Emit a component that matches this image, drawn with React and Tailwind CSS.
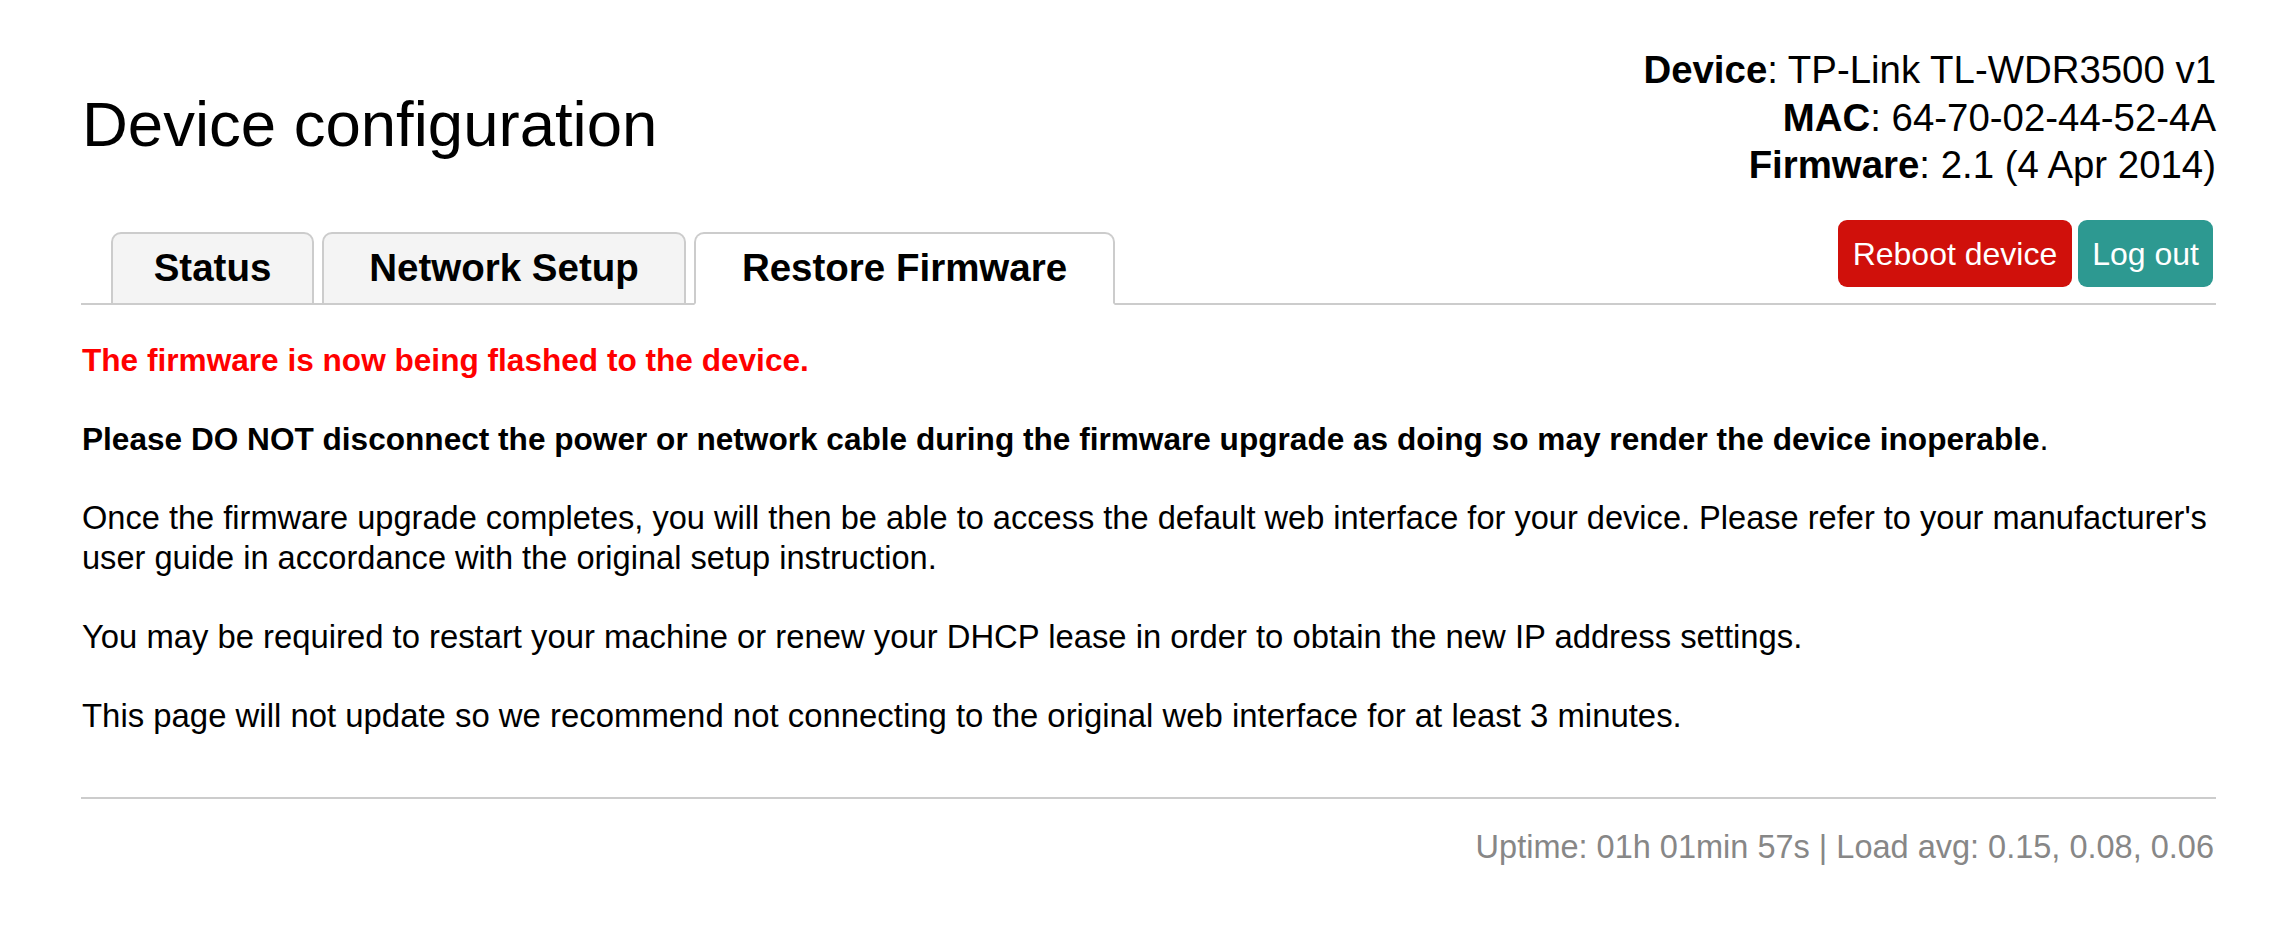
export default function App() {
  const tabBase =
    "h-[73px] -mb-[2px] border-2 border-[#cccccc] rounded-t-[10px] flex items-center justify-center font-bold text-[38.5px] leading-none text-black";
  return (
    <div className="min-h-[931px] bg-white text-black font-[Liberation_Sans,Arial,sans-serif]">
      <div className="w-[2135px] ml-[81px] pt-[46px]">
        <div className="flex justify-between items-start">
          <h1 className="mt-[46px] ml-[1px] text-[63.5px] leading-[64px] font-normal">
            Device configuration
          </h1>
          <div className="text-right text-[38.4px] leading-[47.5px]">
            <div>
              <span className="font-bold">Device</span>: TP-Link TL-WDR3500 v1
            </div>
            <div>
              <span className="font-bold">MAC</span>: 64-70-02-44-52-4A
            </div>
            <div>
              <span className="font-bold">Firmware</span>: 2.1 (4 Apr 2014)
            </div>
          </div>
        </div>

        <div className="mt-[31.5px] flex justify-between items-end border-b-2 border-[#cccccc]">
          <div className="flex items-end gap-[8px] pl-[30px]">
            <div className={`${tabBase} w-[203px] bg-[#f4f4f4]`}>Status</div>
            <div className={`${tabBase} w-[364px] bg-[#f4f4f4]`}>Network Setup</div>
            <div className={`${tabBase} w-[421px] bg-white border-b-white`}>Restore Firmware</div>
          </div>
          <div className="flex gap-[6px] mb-[16px] mr-[3px]">
            <button className="h-[67px] px-[15px] rounded-[9px] bg-[#d0100b] text-white text-[32px] leading-none">
              Reboot device
            </button>
            <button className="h-[67px] px-[14px] rounded-[9px] bg-[#2d9991] text-white text-[32px] leading-none">
              Log out
            </button>
          </div>
        </div>

        <div className="pt-[35px] pl-[1px] text-[32.6px] leading-[40px]">
          <p className="mb-[39px] text-[#ff0000] font-bold text-[31.6px]">
            The firmware is now being flashed to the device.
          </p>
          <p className="mb-[39px]">
            <span className="font-bold text-[31.6px]">
              Please DO NOT disconnect the power or network cable during the firmware upgrade as doing so may render the device inoperable
            </span>
            .
          </p>
          <p className="mb-[39px] whitespace-nowrap">
            Once the firmware upgrade completes, you will then be able to access the default web interface for your device. Please refer to your manufacturer's
            <br />
            user guide in accordance with the original setup instruction.
          </p>
          <p className="mb-[39px] text-[32.8px]">
            You may be required to restart your machine or renew your DHCP lease in order to obtain the new IP address settings.
          </p>
          <p className="text-[32.9px]">
            This page will not update so we recommend not connecting to the original web interface for at least 3 minutes.
          </p>
        </div>

        <div className="mt-[61px] border-t-2 border-[#cccccc]" />
        <div className="pt-[28px] pr-[2px] text-right text-[#878787] text-[32.5px] leading-[40px]">
          Uptime: 01h 01min 57s | Load avg: 0.15, 0.08, 0.06
        </div>
      </div>
    </div>
  );
}
